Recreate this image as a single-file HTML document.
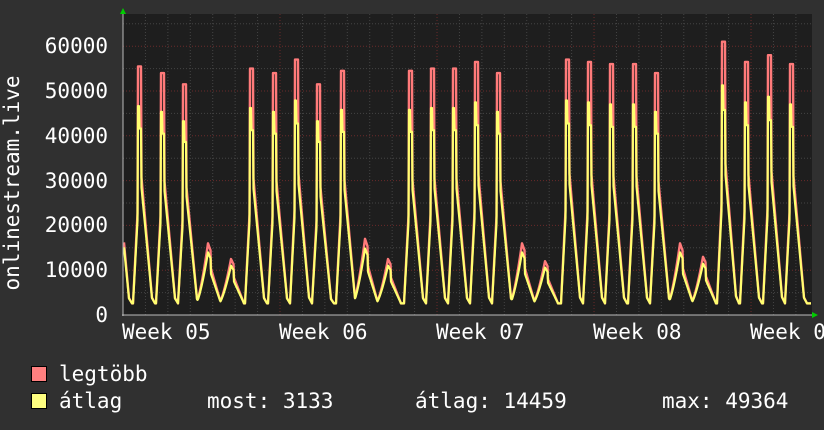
<!DOCTYPE html>
<html><head><meta charset="utf-8"><style>
body{margin:0;width:824px;height:430px;background:#303030;overflow:hidden;font-family:"DejaVu Sans Mono","Liberation Mono",monospace;color:#fff}
svg{position:absolute;left:0;top:0}
text{font-family:"DejaVu Sans Mono","Liberation Mono",monospace;fill:#fff;font-size:21px}
</style></head><body>
<svg id="g" width="824" height="430" viewBox="0 0 824 430">
<rect x="123" y="14" width="689" height="301" fill="#1e1e1e"/>
<g id="grid"></g>
<path id="red" fill="none" stroke="#ff7a7a" stroke-width="2.4" stroke-linejoin="round"/>
<path id="yel" fill="none" stroke="#ffff70" stroke-width="2.2" stroke-linejoin="round"/>
<line x1="123" y1="12" x2="123" y2="316" stroke="#bbb" stroke-width="1"/>
<line x1="122" y1="315" x2="814" y2="315" stroke="#bbb" stroke-width="1"/>
<polygon points="120,14 126,14 123,8" fill="#00cc00"/>
<polygon points="812,312 812,318 818,315" fill="#00cc00"/>
<g text-anchor="end">
<text x="108" y="53">60000</text>
<text x="108" y="98">50000</text>
<text x="108" y="143">40000</text>
<text x="108" y="188">30000</text>
<text x="108" y="232">20000</text>
<text x="108" y="277">10000</text>
<text x="108" y="322">0</text>
</g>
<text x="122" y="339">Week 05</text>
<text x="279" y="339">Week 06</text>
<text x="436" y="339">Week 07</text>
<text x="593" y="339">Week 08</text>
<text x="750" y="339">Week 09</text>
<text transform="translate(19,183) rotate(-90)" text-anchor="middle">onlinestream.live</text>
<rect x="31.5" y="366.5" width="15" height="15" fill="#ff8080" stroke="#000"/>
<rect x="31.5" y="393.5" width="15" height="15" fill="#ffff80" stroke="#000"/>
<text x="59" y="381">legtöbb</text>
<text x="59" y="408">átlag</text>
<text x="207" y="408">most: 3133</text>
<text x="415" y="408">átlag: 14459</text>
<text x="662" y="408">max: 49364</text>
</svg>
<script>
var g=document.getElementById('grid'),h='';
function Y(v){return 315-v*0.00448;}
for(var v=5000;v<=65000;v+=5000){var y=Y(v);if(y<14)break;var maj=v%10000==0;
h+='<line x1="123" x2="812" y1="'+y+'" y2="'+y+'" stroke="'+(maj?'#6a2a2a':'#444')+'" stroke-dasharray="1,2"/>';}
for(var i=0;i<32;i++){var x=123+i*22.43;if(x>812)break;var maj=(i%7==0);
h+='<line y1="14" y2="315" x1="'+x+'" x2="'+x+'" stroke="'+(maj?'#6a2a2a':'#444')+'" stroke-dasharray="1,2"/>';}
g.innerHTML=h;
var px=[116,139,162,184,208,231,251,274,296,318,342,365,388,410,432,454,476,498,522,545,567,589,611,634,656,680,703,723,746,769,791];
var pk=[54000,55500,54000,51500,16000,12500,55000,54000,57000,51500,54500,17000,12500,54500,55000,55000,56500,54000,16000,12000,57000,56500,56000,56000,54000,16000,13000,61000,56500,58000,56000];
var low=2600;
function val(x,yel){var best=low;
for(var i=0;i<px.length;i++){var d=x-px[i],P=pk[i],v=low,top=false;
if(P<20000){
 if(d>=-12&&d<=0)v=low+(P-low)*Math.pow((d+12)/12,1.4);
 else if(d>0&&d<=13){var t=d/13;v=low+(P-low)*(d<3?1-t*0.6:0.75*(1-t));}
 if(yel)v=low+(v-low)*0.85;
}else{
 if(d>=-6&&d<-1)v=low+(0.45*P-low)*((d+6)/5);
 else if(d>=-1&&d<=2){v=P;top=true;}
 else if(d>2&&d<=13)v=0.53*P+(0.07*P-0.53*P)*((d-3)/10);
 else if(d>13&&d<=16)v=0.07*P+(low-0.07*P)*((d-13)/3);
 if(yel)v=top?(d<=0?0.84*P:0.75*P):low+(v-low)*0.92;
}
if(v>best)best=v;}
return best;}
function path(yel){var d='';for(var x=124;x<=811;x+=0.5){d+=(x==124?'M':'L')+x+','+Y(val(x,yel)).toFixed(1);}return d;}
document.getElementById('red').setAttribute('d',path(false));
document.getElementById('yel').setAttribute('d',path(true));
</script>
</body></html>
